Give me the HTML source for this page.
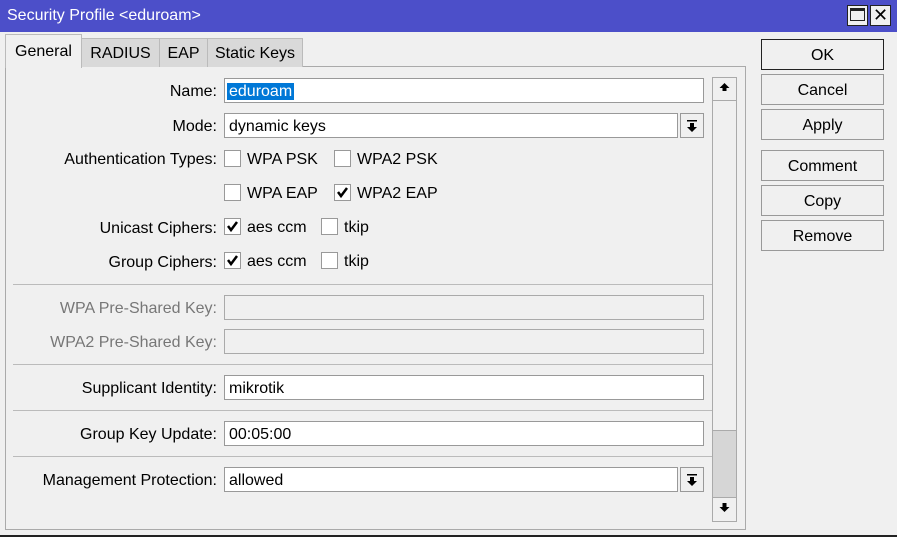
<!DOCTYPE html><html><head><style>
body{margin:0;width:897px;height:537px;overflow:hidden;background:#f0f0f0;font-family:"Liberation Sans",sans-serif;font-size:16px;color:#000;position:relative}
.a{position:absolute}
.title{left:0;top:0;width:897px;height:32px;background:#4c4fc9;color:#fff;line-height:32px;text-indent:7px;font-size:16px}
.tb{width:19px;height:19px;background:#f0f0f0;border:1px solid #222;top:5px}
.tab{top:38px;height:28px;line-height:29px;text-align:center;background:#d9d9d9;border:1px solid #bbb;border-bottom:none}
.panel{left:5px;top:66px;width:739px;height:462px;border:1px solid #aaa}
.lbl{text-align:right;width:217px;left:0;line-height:27px}
.in{background:#fff;border:1px solid #999;height:23px;line-height:25px;padding-left:4px;box-sizing:border-box}
.dis{background:#f0f0f0;border:1px solid #aaa}
.dd{width:24px;height:25px;border:1px solid #999;box-sizing:border-box;background:#f0f0f0}
.cb{width:17px;height:17px;border:1px solid #999;background:#fff;box-sizing:border-box}
.t{line-height:19px}
.sep{left:13px;width:724px;height:0;border-top:1px solid #bbb}
.btn{left:761px;width:123px;height:31px;border:1px solid #999;box-sizing:border-box;text-align:center;line-height:31px}
.g{color:#777}
</style></head><body>
<div class="a title">Security Profile &lt;eduroam&gt;</div>
<div class="a tb" style="left:847px"><div style="margin:2px;height:13px;border:1px solid #222;border-top-width:3px;box-sizing:border-box"></div></div>
<div class="a tb" style="left:870px;text-align:center;line-height:19px;font-size:18px">✕</div>
<div class="a panel"></div>
<div class="a tab" style="left:5px;top:34px;width:75px;height:33px;line-height:33px;background:#f0f0f0">General</div>
<div class="a tab" style="left:81px;width:77px">RADIUS</div>
<div class="a tab" style="left:159px;width:47px">EAP</div>
<div class="a tab" style="left:207px;width:94px">Static Keys</div>

<div class="a lbl" style="top:78px">Name:</div>
<div class="a in" style="left:224px;top:78px;width:480px;height:25px;padding-left:2px"><span style="background:#0078d7;color:#fff;padding:0 2px">eduroam</span></div>
<div class="a lbl" style="top:113px">Mode:</div>
<div class="a in" style="left:224px;top:113px;width:454px;height:25px">dynamic keys</div>
<div class="a dd" style="left:680px;top:113px"><svg width="22" height="23"><rect x="6" y="6" width="10" height="1.5"/><path d="M9 9h4v4h3l-5 5-5-5h3z"/></svg></div>

<div class="a lbl" style="top:146px">Authentication Types:</div>
<div class="a cb" style="left:224px;top:150px"></div><div class="a t" style="left:247px;top:150px">WPA PSK</div>
<div class="a cb" style="left:334px;top:150px"></div><div class="a t" style="left:357px;top:150px">WPA2 PSK</div>
<div class="a cb" style="left:224px;top:184px"></div><div class="a t" style="left:247px;top:184px">WPA EAP</div>
<div class="a cb" style="left:334px;top:184px"><svg width="15" height="15"><path d="M3 7l3 4 6-8" stroke="#000" stroke-width="2.5" fill="none"/></svg></div><div class="a t" style="left:357px;top:184px">WPA2 EAP</div>
<div class="a lbl" style="top:215px">Unicast Ciphers:</div>
<div class="a cb" style="left:224px;top:218px"><svg width="15" height="15"><path d="M3 7l3 4 6-8" stroke="#000" stroke-width="2.5" fill="none"/></svg></div><div class="a t" style="left:247px;top:218px">aes ccm</div>
<div class="a cb" style="left:321px;top:218px"></div><div class="a t" style="left:344px;top:218px">tkip</div>
<div class="a lbl" style="top:249px">Group Ciphers:</div>
<div class="a cb" style="left:224px;top:252px"><svg width="15" height="15"><path d="M3 7l3 4 6-8" stroke="#000" stroke-width="2.5" fill="none"/></svg></div><div class="a t" style="left:247px;top:252px">aes ccm</div>
<div class="a cb" style="left:321px;top:252px"></div><div class="a t" style="left:344px;top:252px">tkip</div>

<div class="a sep" style="top:284px"></div>
<div class="a lbl g" style="top:295px">WPA Pre-Shared Key:</div>
<div class="a in dis" style="left:224px;top:295px;width:480px;height:25px"></div>
<div class="a lbl g" style="top:329px">WPA2 Pre-Shared Key:</div>
<div class="a in dis" style="left:224px;top:329px;width:480px;height:25px"></div>
<div class="a sep" style="top:364px"></div>
<div class="a lbl" style="top:375px">Supplicant Identity:</div>
<div class="a in" style="left:224px;top:375px;width:480px;height:25px">mikrotik</div>
<div class="a sep" style="top:410px"></div>
<div class="a lbl" style="top:421px">Group Key Update:</div>
<div class="a in" style="left:224px;top:421px;width:480px;height:25px">00:05:00</div>
<div class="a sep" style="top:456px"></div>
<div class="a lbl" style="top:467px">Management Protection:</div>
<div class="a in" style="left:224px;top:467px;width:454px;height:25px">allowed</div>
<div class="a dd" style="left:680px;top:467px"><svg width="22" height="23"><rect x="6" y="6" width="10" height="1.5"/><path d="M9 9h4v4h3l-5 5-5-5h3z"/></svg></div>

<div class="a" style="left:712px;top:77px;width:23px;height:443px;border:1px solid #aaa;background:#f0f0f0"></div>
<div class="a" style="left:713px;top:430px;width:23px;height:66px;background:#d6d6d6;border-top:1px solid #aaa;border-bottom:1px solid #aaa"></div>
<div class="a" style="left:713px;top:78px;width:23px;height:22px;border-bottom:1px solid #aaa"><svg width="23" height="22"><path d="M11.5 5l5 5h-3v3h-4v-3h-3z"/></svg></div>
<div class="a" style="left:713px;top:498px;width:23px;height:22px"><svg width="23" height="22"><path d="M9.5 5h4v4h3l-5 5-5-5h3z"/></svg></div>

<div class="a btn" style="top:39px;border-color:#222">OK</div>
<div class="a btn" style="top:74px">Cancel</div>
<div class="a btn" style="top:109px">Apply</div>
<div class="a btn" style="top:150px">Comment</div>
<div class="a btn" style="top:185px">Copy</div>
<div class="a btn" style="top:220px">Remove</div>
<div class="a" style="left:0;top:535px;width:897px;height:2px;background:#222"></div>
</body></html>
